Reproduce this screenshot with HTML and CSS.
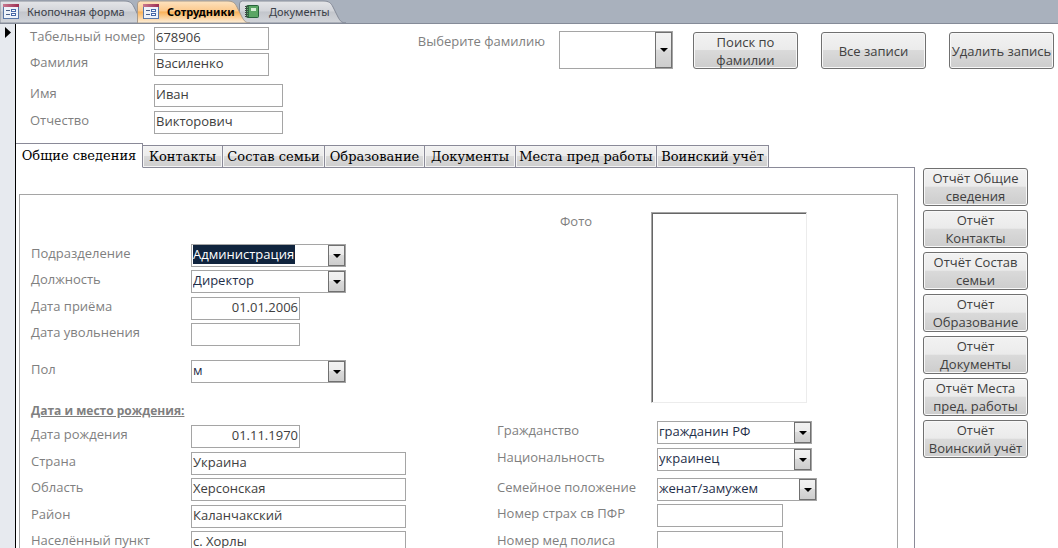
FILE: index.html
```html
<!DOCTYPE html>
<html lang="ru">
<head>
<meta charset="utf-8">
<title>Сотрудники</title>
<link rel="stylesheet" href="styles.css">
</head>
<body>
<svg class="defs" width="0" height="0" aria-hidden="true">
  <linearGradient id="plain" x1="0" y1="0" x2="0" y2="1">
    <stop offset="0" stop-color="#e4e5e8"/><stop offset=".45" stop-color="#d3d5da"/><stop offset=".5" stop-color="#c3c6cc"/><stop offset="1" stop-color="#d2d5da"/>
  </linearGradient>
  <linearGradient id="hot" x1="0" y1="0" x2="0" y2="1">
    <stop offset="0" stop-color="#fde3c0"/><stop offset=".45" stop-color="#fcc98d"/><stop offset=".5" stop-color="#f9b25a"/><stop offset="1" stop-color="#fdf0dc"/>
  </linearGradient>
  <linearGradient id="bar" x1="0" y1="0" x2="1" y2="0">
    <stop offset="0" stop-color="#c9788f"/><stop offset="1" stop-color="#9c2f52"/>
  </linearGradient>
  <symbol id="form-icon" viewBox="0 0 16 15">
    <rect x=".5" y=".5" width="15" height="14" fill="#eef3fa" stroke="#5a78a8"/>
    <rect x="0" y="0" width="16" height="3" fill="url(#bar)"/>
    <path d="M3 6.500h4M3 10.500h4" stroke="#4a5e86"/>
    <rect x="8.500" y="5.500" width="4" height="2" fill="#fff" stroke="#4668a8"/>
    <rect x="8.500" y="9.500" width="4" height="2" fill="#fff" stroke="#4668a8"/>
  </symbol>
  <symbol id="report-icon" viewBox="0 0 16 15">
    <rect x="1.500" y="1.500" width="12" height="12" rx="1" fill="#5aa564" stroke="#27623a"/>
    <path d="M3.500 2v11" stroke="#2f6b41"/>
    <path d="M0 2.500h3M0 4.500h3M0 6.500h3M0 8.500h3M0 10.500h3M0 12.500h3" stroke="#3f4a44"/>
    <rect x="6" y="4" width="5" height="3" fill="#d6ecd5"/>
  </symbol>
</svg>
<nav class="doc-tabs" aria-label="Открытые объекты">
  <button class="doc-tab doc-tab-first"><svg class="doc-shape" viewBox="0 0 152 23" preserveAspectRatio="none"><path d="M0 23V1h124c6 0 8 2 10 6l5 10c2 4 4 6 8 6z" fill="url(#plain)" stroke="#858b98"/></svg><svg class="doc-icon"><use href="#form-icon"/></svg><span>Кнопочная форма</span></button>
  <button class="doc-tab doc-tab-active"><svg class="doc-shape" viewBox="0 0 118 23" preserveAspectRatio="none"><path d="M.5 23V4q0-3 3-3H90c6 0 8 2 10 6l5 10c2 4 4 6 8 6z" fill="url(#hot)" stroke="#a79a8c"/></svg><svg class="doc-icon"><use href="#form-icon"/></svg><span>Сотрудники</span></button>
  <button class="doc-tab doc-tab-last"><svg class="doc-shape" viewBox="0 0 110 23" preserveAspectRatio="none"><path d="M.5 23V4q0-3 3-3H84c6 0 8 2 10 6l5 10c2 4 4 6 8 6z" fill="url(#plain)" stroke="#858b98"/></svg><svg class="doc-icon"><use href="#report-icon"/></svg><span>Документы</span></button>
</nav>
<main class="sheet">
  <div class="record-bar"><svg width="7" height="12" viewBox="0 0 7 12"><path d="M0 0l6 5.500L0 11z" fill="#000"/></svg></div>
  <form class="form">
    <header class="head">
      <div class="person">
        <label for="num">Табельный номер</label><input id="num" class="short" value="678906">
        <label for="fam">Фамилия</label><input id="fam" class="short" value="Василенко">
        <label for="name">Имя</label><input id="name" value="Иван">
        <label for="otch">Отчество</label><input id="otch" value="Викторович">
      </div>
      <div class="search">
        <label for="find">Выберите фамилию</label>
        <span class="combo combo-tall"><select id="find"><option></option></select><i></i></span>
      </div>
      <div class="actions">
        <button type="button">Поиск по<br>фамилии</button>
        <button type="button">Все записи</button>
        <button type="button">Удалить запись</button>
      </div>
    </header>
    <div class="work">
      <section class="tabbed">
        <div class="tabs" role="tablist">
          <button type="button" role="tab" aria-selected="true">Общие сведения</button>
          <button type="button" role="tab">Контакты</button>
          <button type="button" role="tab">Состав семьи</button>
          <button type="button" role="tab">Образование</button>
          <button type="button" role="tab">Документы</button>
          <button type="button" role="tab">Места пред работы</button>
          <button type="button" role="tab">Воинский учёт</button>
        </div>
        <div class="page">
          <div class="subform">
            <div class="fields fields-left">
              <label for="dep">Подразделение</label><span class="combo"><select id="dep" class="picked"><option>Администрация</option></select><i></i></span>
              <label for="pos">Должность</label><span class="combo"><select id="pos"><option>Директор</option></select><i></i></span>
              <label for="hired">Дата приёма</label><input id="hired" class="date" value="01.01.2006">
              <label for="fired">Дата увольнения</label><input id="fired" class="date">
              <label for="sex">Пол</label><span class="combo"><select id="sex"><option>м</option></select><i></i></span>
              <h2>Дата и место рождения:</h2>
              <label for="born">Дата рождения</label><input id="born" class="date" value="01.11.1970">
              <label for="country">Страна</label><input id="country" value="Украина">
              <label for="region">Область</label><input id="region" value="Херсонская">
              <label for="district">Район</label><input id="district" value="Каланчакский">
              <label for="town">Населённый пункт</label><input id="town" value="с. Хорлы">
            </div>
            <div class="right">
              <div class="photo"><span>Фото</span><div class="photo-frame"></div></div>
              <div class="fields fields-right">
                <label for="cit">Гражданство</label><span class="combo"><select id="cit"><option>гражданин РФ</option></select><i></i></span>
                <label for="nat">Национальность</label><span class="combo"><select id="nat"><option>украинец</option></select><i></i></span>
                <label for="mar">Семейное положение</label><span class="combo combo-wide"><select id="mar"><option>женат/замужем</option></select><i></i></span>
                <label for="pfr">Номер страх св ПФР</label><input id="pfr">
                <label for="med">Номер мед полиса</label><input id="med">
              </div>
            </div>
          </div>
        </div>
      </section>
      <aside class="reports">
        <button type="button">Отчёт Общие<br>сведения</button>
        <button type="button">Отчёт<br>Контакты</button>
        <button type="button">Отчёт Состав<br>семьи</button>
        <button type="button">Отчёт<br>Образование</button>
        <button type="button">Отчёт<br>Документы</button>
        <button type="button">Отчёт Места<br>пред. работы</button>
        <button type="button">Отчёт<br>Воинский учёт</button>
      </aside>
    </div>
  </form>
</main>
</body>
</html>
```
FILE: styles.css
```css
* { box-sizing: border-box; }
body {
  margin: 0;
  height: 100vh;
  overflow: hidden;
  display: flex;
  flex-direction: column;
  background: #fff;
  color: #404040;
  font: 13px/18px "Open Sans", "Noto Sans", sans-serif;
}
button, input, select { font: inherit; color: inherit; margin: 0; }
.defs { position: absolute; }

/* Document tabs */
.doc-tabs {
  flex: none;
  display: flex;
  height: 24px;
  background: #a9b1bd;
  border-bottom: 1px solid #858b98;
}
.doc-tab {
  position: relative;
  display: flex;
  align-items: center;
  height: 23px;
  padding: 0 0 0 6px;
  gap: 8px;
  border: 0;
  background: none;
  font: 11px/18px "Noto Sans", sans-serif;
  color: #3b4048;
  white-space: nowrap;
}
.doc-tab > * { position: relative; }
.doc-tab .doc-shape { position: absolute; inset: 0; width: 100%; height: 23px; }
.doc-tab-first { width: 152px; padding-left: 3px; }
.doc-tab-active { width: 118px; margin-left: -15px; z-index: 1; font-weight: bold; color: #000; }
.doc-tab-last { width: 110px; margin-left: -16px; }
.doc-icon { flex: none; width: 16px; height: 15px; }

/* Sheet */
.sheet { flex: 1; min-height: 0; display: flex; }
.record-bar {
  flex: none;
  width: 16px;
  padding: 3px 0 0 5px;
  background: #e7eaef;
  border-right: 1px solid #000;
}
.record-bar svg { display: block; }
.form { flex: 1; min-width: 0; }
label, .photo { color: #7f7f7f; white-space: nowrap; }
input {
  height: 23px;
  padding: 0 1px 3px;
  border: 1px solid #a5a5a5;
  background: #fff;
}
.head { display: flex; height: 119px; padding: 3px 4px 0 14px; }
.person {
  display: grid;
  grid-template-columns: 124px 129px;
  grid-template-rows: 26px 31px 27px 23px;
  flex: 1;
}
.person .short { width: 115px; }
.search { display: flex; gap: 14px; padding: 4px 20px 0 0; }
.search label { padding-top: 1px; }
.actions { display: flex; gap: 23px; padding-top: 5px; }
.actions button, .reports button {
  width: 105px;
  height: 38px;
  padding: 0;
  border: 1px solid #707070;
  border-radius: 3px;
  box-shadow: inset 0 0 0 1px #f8f8f8;
  background: linear-gradient(#f2f2f2, #ebebeb 48%, #dadada 50%, #cdcdcd);
  line-height: 18px;
  white-space: nowrap;
}
.actions button { height: 37px; }

/* Drop-downs */
.combo { position: relative; display: block; width: 155px; height: 23px; }
.combo select {
  appearance: none;
  display: block;
  width: 100%;
  height: 100%;
  padding: 0 20px 3px 1px;
  border: 1px solid #a5a5a5;
  border-radius: 0;
  background: #fff;
  color: #1f2f4a;
}
.combo i {
  position: absolute;
  right: 1px;
  top: 1px;
  bottom: 1px;
  width: 17px;
  border: 1px solid #707070;
  background: linear-gradient(#f2f2f2, #ebebeb 48%, #dadada 50%, #cdcdcd);
  pointer-events: none;
}
.combo i::after {
  content: "";
  position: absolute;
  left: 4px;
  top: calc(50% - 2px);
  border: solid transparent;
  border-width: 4px 4px 0;
  border-top-color: #000;
}
.combo-tall { width: 114px; height: 38px; }
.combo-wide { width: 160px; }
.combo .picked {
  color: #fff;
  background: linear-gradient(#10243e, #10243e) 1px 0 / 102px 19px no-repeat #fff;
}

/* Tab control */
.work { display: flex; align-items: flex-start; gap: 8px; }
.tabbed { flex: none; width: 899px; }
.tabs {
  display: grid;
  grid-template-columns: 127px 80px 102px 100px 91px 141px 112px;
  align-items: end;
  height: 25px;
}
.tabs button {
  position: relative;
  height: 23px;
  padding: 0;
  border: 1px solid #8a8a98;
  border-left: 0;
  box-shadow: inset 0 0 0 1px #f4f4f4;
  background: linear-gradient(#f2f2f2, #ebebeb 48%, #dadada 50%, #cdcdcd);
  font: 13px/20px "DejaVu Serif", "Liberation Serif", serif;
  color: #000;
  white-space: nowrap;
}
.tabs [aria-selected="true"] { height: 25px; box-shadow: none; background: #fff; border-bottom-color: #fff; }
.page {
  margin-top: -1px;
  padding: 26px 16px 0 3px;
  border: solid #8a8a98;
  border-width: 1px 1px 0 0;
}
.subform {
  display: flex;
  justify-content: space-between;
  min-height: 380px;
  padding: 0 80px 0 11px;
  border: 1px solid #a5a5a5;
}
.fields { display: grid; grid-template-columns: 160px auto; justify-content: start; }
.fields-left { grid-template-rows: 26px 27px 26px 37px 38px 27px 27px 26px 27px 26px 27px; padding-top: 49px; }
.fields-left input { width: 215px; }
.fields-left .date { width: 109px; text-align: right; }
.fields h2 {
  grid-column: 1 / 3;
  margin: 0;
  padding-top: 4px;
  font: bold 12px/18px "Open Sans", "Noto Sans", sans-serif;
  color: #7f7f7f;
  text-decoration: underline;
}
.fields-right { grid-template-rows: 27px 30px 26px 27px 27px; }
.fields-right input { width: 126px; }
.photo { display: grid; grid-template-columns: 91px 156px; padding: 17px 0 18px 63px; }
.photo-frame {
  height: 191px;
  border: 1px solid;
  border-color: #a5a5a5 #ececec #ececec #a5a5a5;
  box-shadow: inset 1px 1px #666;
}

/* Report buttons */
.reports { display: grid; gap: 4px; padding-top: 25px; }
```
